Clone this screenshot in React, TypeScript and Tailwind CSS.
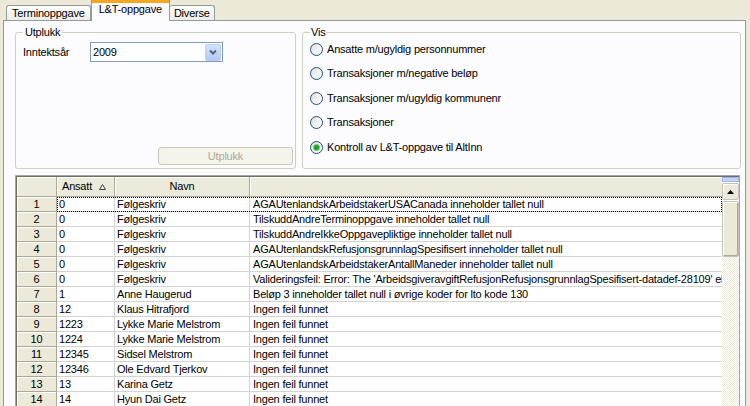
import { useState } from 'react'

type Row = { n: number; ansatt: string; navn: string; tekst: string }

const rows: Row[] = [
  { n: 1, ansatt: '0', navn: 'Følgeskriv', tekst: 'AGAUtenlandskArbeidstakerUSACanada inneholder tallet null' },
  { n: 2, ansatt: '0', navn: 'Følgeskriv', tekst: 'TilskuddAndreTerminoppgave inneholder tallet null' },
  { n: 3, ansatt: '0', navn: 'Følgeskriv', tekst: 'TilskuddAndreIkkeOppgavepliktige inneholder tallet null' },
  { n: 4, ansatt: '0', navn: 'Følgeskriv', tekst: 'AGAUtenlandskRefusjonsgrunnlagSpesifisert inneholder tallet null' },
  { n: 5, ansatt: '0', navn: 'Følgeskriv', tekst: 'AGAUtenlandskArbeidstakerAntallManeder inneholder tallet null' },
  {
    n: 6,
    ansatt: '0',
    navn: 'Følgeskriv',
    tekst: "Valideringsfeil: Error: The 'ArbeidsgiveravgiftRefusjonRefusjonsgrunnlagSpesifisert-datadef-28109' el",
  },
  { n: 7, ansatt: '1', navn: 'Anne Haugerud', tekst: 'Beløp 3 inneholder tallet null i øvrige koder for lto kode 130' },
  { n: 8, ansatt: '12', navn: 'Klaus Hitrafjord', tekst: 'Ingen feil funnet' },
  { n: 9, ansatt: '1223', navn: 'Lykke Marie Melstrom', tekst: 'Ingen feil funnet' },
  { n: 10, ansatt: '1224', navn: 'Lykke Marie Melstrom', tekst: 'Ingen feil funnet' },
  { n: 11, ansatt: '12345', navn: 'Sidsel Melstrom', tekst: 'Ingen feil funnet' },
  { n: 12, ansatt: '12346', navn: 'Ole Edvard Tjerkov', tekst: 'Ingen feil funnet' },
  { n: 13, ansatt: '13', navn: 'Karina Getz', tekst: 'Ingen feil funnet' },
  { n: 14, ansatt: '14', navn: 'Hyun Dai Getz', tekst: 'Ingen feil funnet' },
]

const visOptions = [
  'Ansatte m/ugyldig personnummer',
  'Transaksjoner m/negative beløp',
  'Transaksjoner m/ugyldig kommunenr',
  'Transaksjoner',
  'Kontroll av L&T-oppgave til AltInn',
]

function Radio({ checked }: { checked: boolean }) {
  return (
    <span className="flex h-[13px] w-[13px] shrink-0 items-center justify-center rounded-full border border-[#1C5180] bg-gradient-to-br from-[#DCDBD5] via-[#F2F2EE] to-white">
      {checked && <span className="h-[5px] w-[5px] rounded-full bg-[#21A121] shadow-[0_0_0_1px_#6FCF6F]" />}
    </span>
  )
}

export default function App() {
  const [vis, setVis] = useState(4)

  return (
    <div className="h-[406px] w-[750px] overflow-hidden bg-[#ECE9D8] font-['Liberation_Sans',Arial,sans-serif] text-[11px] leading-[13px] tracking-[-0.2px] text-black">
      {/* Tabs */}
      <div className="flex h-[20px] items-end pl-[6px]">
        <div className="flex h-[15px] items-center rounded-t-[3px] border border-b-0 border-[#919B9C] bg-gradient-to-b from-white to-[#ECEBE6] px-[5px]">
          Terminoppgave
        </div>
        <div className="relative z-10 -mb-px flex h-[21px] items-center border-x border-[#919B9C] bg-[#FCFCFE] px-[7px] pb-[3px] shadow-[inset_0_3px_0_#F5A623]">
          L&amp;T-oppgave
        </div>
        <div className="flex h-[15px] items-center rounded-t-[3px] border border-b-0 border-l-0 border-[#919B9C] bg-gradient-to-b from-white to-[#ECEBE6] px-[4px]">
          Diverse
        </div>
      </div>

      {/* Panel */}
      <div className="ml-[3px] h-[400px] w-[743px] border border-[#919B9C] bg-[#FCFCFE] pl-[11px]">
        <div className="mt-[5px] flex gap-[6px]">
          <fieldset className="h-[143px] w-[281px] rounded-[3px] border border-[#D0D0BF] px-[7px]">
            <legend className="px-[2px] leading-[13px]">Utplukk</legend>
            <div className="mt-[3px] flex h-[20px] items-center">
              <span className="w-[67px]">Inntektsår</span>
              <div className="flex h-[20px] w-[133px] items-center border border-[#7F9DB9] bg-white pl-[2px]">
                <span className="flex-1">2009</span>
                <span className="mr-px flex h-[17px] w-[16px] items-center justify-center rounded-[2px] border border-[#B9CDFA] bg-gradient-to-b from-[#D5E2FD] to-[#B4C8F6]">
                  <svg width="8" height="6" viewBox="0 0 8 6">
                    <path d="M1 1.5 L4 4.5 L7 1.5" fill="none" stroke="#4D6185" strokeWidth="2" />
                  </svg>
                </span>
              </div>
            </div>
            <div className="mt-[85px] flex justify-end">
              <button
                disabled
                className="-mr-[5px] h-[18px] w-[135px] rounded-[3px] border border-[#C9C7BA] bg-[#F5F4EA] text-[#ACA899]"
              >
                Utplukk
              </button>
            </div>
          </fieldset>

          <fieldset className="h-[143px] w-[439px] rounded-[3px] border border-[#D0D0BF] pl-[7px]">
            <legend className="px-[1px] leading-[13px]">Vis</legend>
            <div className="mt-[3px] flex flex-col gap-[10.5px]">
              {visOptions.map((o, i) => (
                <label key={o} className="flex h-[14px] items-center gap-[4px]" onClick={() => setVis(i)}>
                  <Radio checked={vis === i} />
                  <span>{o}</span>
                </label>
              ))}
            </div>
          </fieldset>
        </div>

        {/* Grid */}
        <div className="mt-[6px] w-[725px] border border-[#A7A6AA]">
          <div className="flex border-l border-t border-[#716F64] bg-white">
            <div className="w-[705px]">
              <div className="flex h-[20px] border-b border-[#ACA899] bg-[#EBEADB]">
                <div className="w-[40px] border-r border-[#ACA899] shadow-[inset_1px_1px_0_#fff]" />
                <div className="flex w-[58px] items-center border-r border-[#ACA899] pl-[5px] shadow-[inset_1px_1px_0_#fff]">
                  <span>Ansatt</span>
                  <svg className="ml-[7px]" width="7" height="6" viewBox="0 0 7 6">
                    <path d="M3.5 0.5 L6.5 5.5 L0.5 5.5 Z" fill="none" stroke="#404040" strokeWidth="1" />
                  </svg>
                </div>
                <div className="flex w-[135px] items-center justify-center border-r border-[#ACA899] shadow-[inset_1px_1px_0_#fff]">
                  Navn
                </div>
                <div className="w-[472px] shadow-[inset_1px_1px_0_#fff]" />
              </div>
              {rows.map((r) => (
                <div key={r.n} className="relative flex h-[15px]">
                  <div className="flex w-[40px] items-center justify-center border-b border-r border-[#ACA899] bg-[#ECE9D8] shadow-[inset_1px_1px_0_#fff]">
                    {r.n}
                  </div>
                  <div className="flex w-[58px] items-center border-b border-r border-[#D4D4D4] pl-[2px]">{r.ansatt}</div>
                  <div className="flex w-[135px] items-center border-b border-r border-[#D4D4D4] pl-[2px]">{r.navn}</div>
                  <div className="flex w-[472px] items-center overflow-hidden whitespace-nowrap border-b border-[#D4D4D4] pl-[3px]">
                    {r.tekst}
                  </div>
                  {r.n === 1 && (
                    <div className="pointer-events-none absolute inset-y-0 left-[40px] right-0 border border-dotted border-black" />
                  )}
                </div>
              ))}
            </div>

            {/* Scrollbar */}
            <div className="flex w-[17px] flex-col">
              <div className="h-[5px] border border-[#9DB4EC] bg-[#C3D3FD]" />
              <div className="mt-px flex h-[17px] items-center justify-center rounded-[2px] border border-[#C4C2B8] bg-[#ECE9D8] shadow-[inset_1px_1px_0_#fff]">
                <svg width="7" height="4" viewBox="0 0 7 4">
                  <path d="M3.5 0 L7 4 L0 4 Z" fill="#000" />
                </svg>
              </div>
              <div className="mt-px h-[56px] rounded-[2px] border border-[#C4C2B8] bg-[#ECE9D8] shadow-[inset_1px_1px_0_#fff,inset_-1px_-1px_0_#ACA899]" />
              <div className="flex-1 bg-[image:repeating-conic-gradient(#ECE9D8_0_25%,#ffffff_0_50%)] bg-[length:2px_2px]" />
            </div>
          </div>
        </div>
      </div>
    </div>
  )
}
